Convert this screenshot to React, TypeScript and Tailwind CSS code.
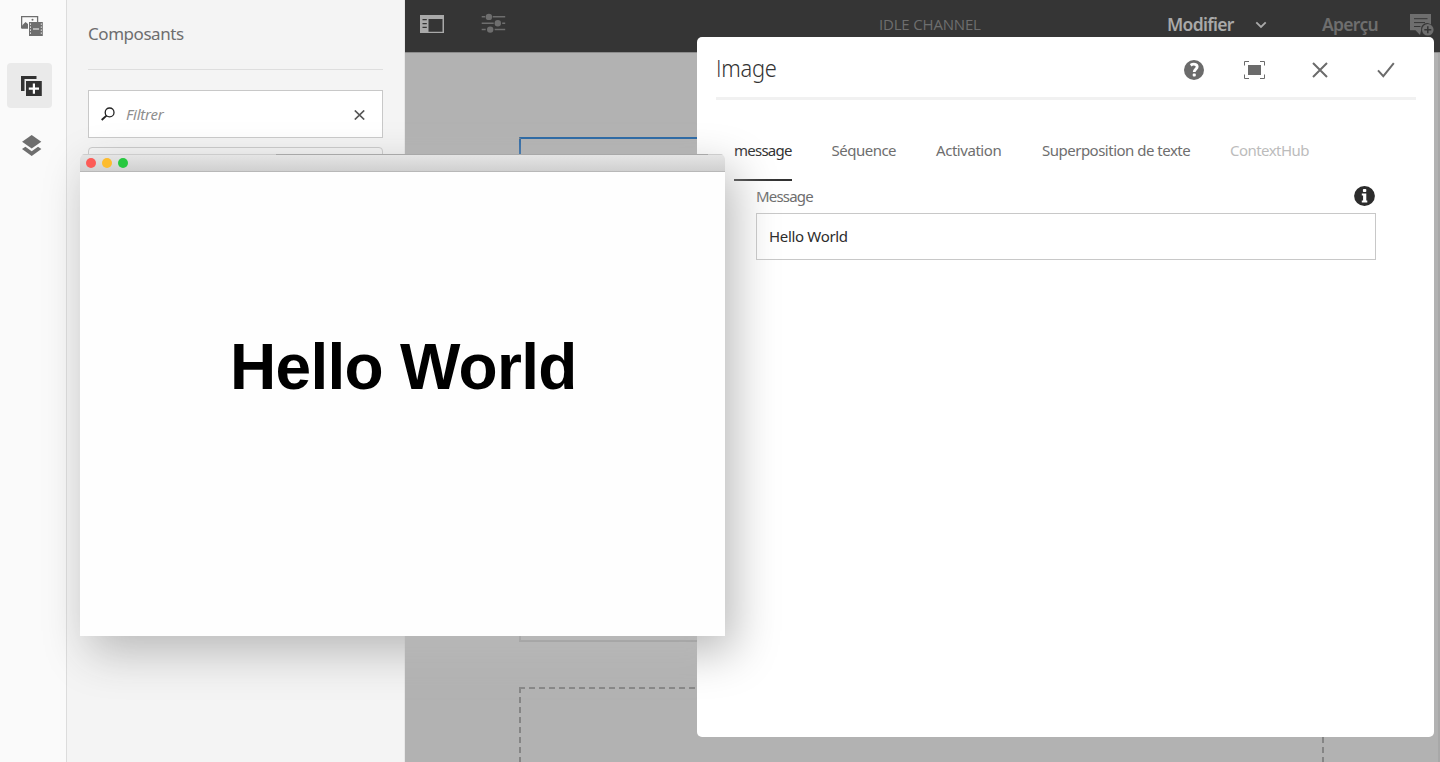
import React from "react";

function AssetsIcon() {
  return (
    <svg width="22" height="20" viewBox="0 0 22 20" className="block">
      <path fill="none" stroke="#6e6e6e" strokeWidth="1.3" d="M0.6 12.5V0.6h16V6" />
      <path fill="#6e6e6e" d="M1 12V9.5L4.5 6 7 8v4.8H1z" />
      <circle cx="11.5" cy="3.8" r="1" fill="#6e6e6e" />
      <path fill="#6e6e6e" d="M8 6h13.8v14H8z" />
      <path
        fill="#fafafa"
        d="M9 7.5h1v1.3H9zM9 10.5h1v1.3H9zM9 13.5h1v1.3H9zM9 16.5h1v1.3H9zM19.8 7.5h1v1.3h-1zM19.8 10.5h1v1.3h-1zM19.8 13.5h1v1.3h-1zM19.8 16.5h1v1.3h-1zM12 12.6h6v1h-6z"
      />
    </svg>
  );
}

function ComponentsIcon() {
  return (
    <svg width="21" height="20" viewBox="0 0 21 20" className="block">
      <path fill="#323232" d="M0 0h15.5v3H3.5v12H0z" />
      <path fill="#323232" d="M5 5h15.8v15H5z" />
      <path fill="#fff" d="M11.8 7.5h2.2v4h4v2.2h-4v4h-2.2v-4h-4v-2.2h4z" />
    </svg>
  );
}

function LayersIcon() {
  return (
    <svg width="20" height="21" viewBox="0 0 20 21" className="block">
      <path fill="#6e6e6e" d="M9.7 0l9.6 6.8-9.6 6.8L0.1 6.8z" />
      <path fill="#6e6e6e" d="M3.4 11.8l6.3 4.4 6.3-4.4 3.4 2.3-9.7 6.8L0 14.1z" />
    </svg>
  );
}

function SidePanelIcon() {
  return (
    <svg width="24" height="18" viewBox="0 0 24 18" className="block">
      <path fill="#a9a9a9" fillRule="evenodd" d="M0 0h24v18H0zM8.5 4v12.7h14V4z" />
      <path stroke="#353535" strokeWidth="1.1" d="M2.5 4.6h4.3M2.5 8.6h4.3M2.5 12.4h4.3" />
    </svg>
  );
}

function SlidersIcon() {
  return (
    <svg width="25" height="20" viewBox="0 0 25 20" className="block" fill="#6e6e6e">
      <path stroke="#6e6e6e" strokeWidth="1.5" d="M0.7 3.8h3.5M11.7 3.8h12.5M0.7 10.3h12M21.2 10.3h3M0.7 16.6h4M13.7 16.6h10.5" />
      <circle cx="7.9" cy="3.9" r="3.2" />
      <circle cx="16.8" cy="10.3" r="3.2" />
      <circle cx="9.2" cy="16.6" r="3.2" />
    </svg>
  );
}

function AnnotateIcon() {
  return (
    <svg width="24" height="23" viewBox="0 0 24 23" className="block">
      <path fill="#6e6e6e" d="M0 0h21v10.5a6 6 0 0 0-9.8 5.5L10 21l-4.5-4.7H0z" />
      <path stroke="#353535" strokeWidth="1" d="M4 4.7h13.5M4 8.6h11M4 12.5h6.5" />
      <circle cx="17.8" cy="15.8" r="5.8" fill="#6e6e6e" />
      <path stroke="#353535" strokeWidth="1.5" d="M17.8 12.3v7M14.3 15.8h7" />
    </svg>
  );
}

function HelpIcon() {
  return (
    <svg width="20" height="20" viewBox="0 0 20 20" className="block">
      <circle cx="10" cy="10" r="10" fill="#6b6b6b" />
      <path fill="none" stroke="#fff" strokeWidth="2.8" d="M6.6 5.2c3-1.9 6.6-1 6.6 1.6 0 2.4-3 2.3-3 5.2" />
      <rect x="8.7" y="13.4" width="3.1" height="3" rx="1" fill="#fff" />
    </svg>
  );
}

function FullscreenIcon() {
  return (
    <svg width="21" height="18" viewBox="0 0 21 18" className="block">
      <path fill="none" stroke="#6b6b6b" strokeWidth="1" d="M0.5 4.5v-4h4.5M16 0.5h4.5v4M20.5 13.5v4H16M5 17.5H0.5v-4" />
      <path fill="#6b6b6b" d="M4 4h13v10H4z" />
    </svg>
  );
}

function InfoIcon() {
  return (
    <svg width="21" height="20" viewBox="0 0 21 20" className="block">
      <ellipse cx="10.5" cy="10" rx="10.4" ry="10" fill="#2c2c2c" />
      <rect x="8.9" y="3" width="3.4" height="3" rx="0.8" fill="#fff" />
      <path fill="#fff" d="M7.8 7.6h4.5v6.8h1v2H7.8v-2h1.3V9.4H7.8z" />
    </svg>
  );
}

function Rail() {
  return (
    <nav className="flex w-[67px] shrink-0 flex-col items-start border-r border-[#dcdcdc] bg-[#fafafa]">
      <div className="pt-4 pl-[21px]"><AssetsIcon /></div>
      <div className="mt-[27px] ml-[7px] flex h-[45px] w-[45px] items-center justify-center rounded-[4px] bg-[#eaeaea]">
        <div className="pl-1"><ComponentsIcon /></div>
      </div>
      <div className="mt-[27.4px] pl-[22px]"><LayersIcon /></div>
    </nav>
  );
}

function SidePanel() {
  return (
    <aside className="flex w-[338px] shrink-0 flex-col border-r border-[#e8e8e8] bg-[#f4f4f4] pr-[21px] pl-[21px]">
      <h2 className="h-[70px] border-b border-[#dedede] pt-[22px] text-[17px] leading-6 tracking-[-0.45px] text-[#6e6e6e]">
        Composants
      </h2>
      <div className="mt-5 flex h-12 shrink-0 items-center border border-[#c8c8c8] bg-white pl-3">
        <svg width="15" height="14" viewBox="0 0 15 14" className="block shrink-0">
          <circle cx="8.6" cy="5.4" r="4.4" fill="none" stroke="#222" strokeWidth="1.3" />
          <path d="M5.5 8.6L0.7 13" stroke="#222" strokeWidth="1.9" />
        </svg>
        <span className="ml-2.5 flex-1 text-[15px] tracking-[-0.2px] text-[#8e8e8e] italic">Filtrer</span>
        <svg width="11" height="10" viewBox="0 0 11 10" className="mr-[17px] block translate-y-px">
          <path d="M0.8 0.5l9.4 9M10.2 0.5l-9.4 9" stroke="#555" strokeWidth="1.7" />
        </svg>
      </div>
      <div className="mt-[9px] h-[400px] rounded-[4px] border border-[#c8c8c8]" />
    </aside>
  );
}

function Editor() {
  return (
    <main className="flex min-w-0 flex-1 flex-col bg-[#b2b2b2]">
      <header className="flex h-[52px] shrink-0 bg-[#353535] pl-[15px]">
        <div className="w-[61px] shrink-0 pt-[15px]"><SidePanelIcon /></div>
        <div className="w-[398px] shrink-0 pt-[13px]"><SlidersIcon /></div>
        <div className="w-[288px] shrink-0 pt-3 font-['Open_Sans',sans-serif] text-[15px] leading-6 tracking-[-0.18px] text-[#6e6e6e]">
          IDLE CHANNEL
        </div>
        <div className="w-[88px] shrink-0 pt-3 text-[17.5px] leading-6 font-semibold tracking-[-0.7px] text-[#a9a9a9]">Modifier</div>
        <svg width="12" height="8" viewBox="0 0 12 8" className="mt-[21px] block shrink-0">
          <path d="M1.3 1.3L6 6l4.7-4.7" fill="none" stroke="#a9a9a9" strokeWidth="1.8" />
        </svg>
        <div className="ml-[55px] w-[88px] shrink-0 pt-3 text-[17.5px] leading-6 font-semibold tracking-[-0.7px] text-[#6e6e6e]">Aperçu</div>
        <div className="w-6 shrink-0 pt-[14px]"><AnnotateIcon /></div>
      </header>
      <div className="flex min-h-0 flex-1 border-t border-[#8c8c8c]">
        <div className="flex flex-1 flex-col overflow-hidden pt-[84px] pl-[114px]">
          <div className="h-[505px] w-[805px] shrink-0 border-2 border-t-[#2565a3] border-r-[#a2a2a2] border-b-[#808080] border-l-[#808080]">
            <div className="-ml-0.5 h-[100px] w-0.5 bg-[#2c68a5]" />
          </div>
          <div className="mt-[45px] flex h-[75px] w-[805px] shrink-0 flex-col">
            <svg width="805" height="75" viewBox="0 0 805 75" className="block">
              <path d="M0 1h805" stroke="#858585" strokeWidth="2" strokeDasharray="6 4" />
              <path d="M1 0v75M804 0v75" stroke="#858585" strokeWidth="2" strokeDasharray="6 4" />
            </svg>
          </div>
        </div>
        <div className="w-0.5 bg-[#a8a8a8]" />
      </div>
    </main>
  );
}

function ImageDialog() {
  return (
    <section className="absolute top-[37px] left-[697px] flex h-[700px] w-[737px] flex-col rounded-[5px] bg-white">
      <header className="mr-[18px] ml-[19px] flex h-[63px] shrink-0 border-b-[3px] border-[#f1f1f1] pr-[21px]">
        <h1 className="flex-1 origin-left scale-x-[.91] pt-[13px] text-[24px] leading-9 font-light tracking-[-0.3px] text-[#323232] first-letter:font-['Open_Sans']">
          Image
        </h1>
        <div className="mt-[23px] w-[60px]"><HelpIcon /></div>
        <div className="mt-6 w-[68px]"><FullscreenIcon /></div>
        <svg width="16" height="16" viewBox="0 0 16 16" className="mt-[25px] block">
          <path d="M1 1l14 14M15 1L1 15" stroke="#6b6b6b" strokeWidth="2" />
        </svg>
        <svg width="18" height="16" viewBox="0 0 18 16" className="mt-[25px] ml-[49px] block">
          <path d="M1 8.3l5.3 5.8L16.8 1.2" fill="none" stroke="#6b6b6b" strokeWidth="2" />
        </svg>
      </header>
      <nav className="mt-9 flex h-[45px] shrink-0 pl-[37px] text-[15px] leading-7 tracking-[-0.5px] text-[#6e6e6e]">
        <div className="mr-[39.5px] w-[58px] border-b-2 border-[#323232] tracking-[-0.75px] whitespace-nowrap text-[#323232]">message</div>
        <div className="w-[104.5px]">Séquence</div>
        <div className="w-[106px] tracking-[-0.45px]">Activation</div>
        <div className="w-[188px]">Superposition de texte</div>
        <div className="tracking-[-0.55px] text-[#bcbcbc]">ContextHub</div>
      </nav>
      <div className="flex flex-col pr-[58px] pl-[59px]">
        <div className="flex h-8 justify-between pt-[3px] text-[15px] leading-6 tracking-[-0.8px] text-[#6e6e6e]">
          <span>Message</span>
          <div className="mt-0.5 mr-px"><InfoIcon /></div>
        </div>
        <div className="flex h-[47px] items-center border border-[#c8c8c8] pl-3 text-[15px] tracking-[-0.33px] text-[#2c2c2c]">
          Hello World
        </div>
      </div>
    </section>
  );
}

function PreviewWindow() {
  return (
    <section className="absolute top-[154px] left-[80px] flex h-[482px] w-[645px] flex-col rounded-t-[5px] bg-[#fefefe] shadow-[9px_16px_46px_#b9b9b9]">
      <div className="flex h-[18px] shrink-0 flex-col overflow-hidden rounded-t-[5px] border-b border-[#b8b8b8] bg-linear-to-b from-[#e6e6e6] to-[#d0d0d0]">
        <div className="flex h-px shrink-0 bg-[#cccccc] pr-[17px] pl-[196px]">
          <div className="flex-1 bg-[#a8a8a8]" />
        </div>
        <div className="flex flex-1 items-center gap-[5.8px] pl-1.5">
          <span className="h-2.5 w-2.5 rounded-full bg-[#fc5b57]" />
          <span className="h-2.5 w-2.5 rounded-full bg-[#fdbc2e]" />
          <span className="h-2.5 w-2.5 rounded-full bg-[#27c840]" />
        </div>
      </div>
      <div className="pt-[159px] pl-[150px] font-['Liberation_Sans',Arial,sans-serif] text-[64px] leading-[72px] font-bold tracking-[-0.7px] text-black">
        Hello World
      </div>
    </section>
  );
}

export default function App() {
  return (
    <div className="relative flex h-[762px] w-[1440px] overflow-hidden font-['Noto_Sans',sans-serif]">
      <Rail />
      <SidePanel />
      <Editor />
      <ImageDialog />
      <PreviewWindow />
    </div>
  );
}
